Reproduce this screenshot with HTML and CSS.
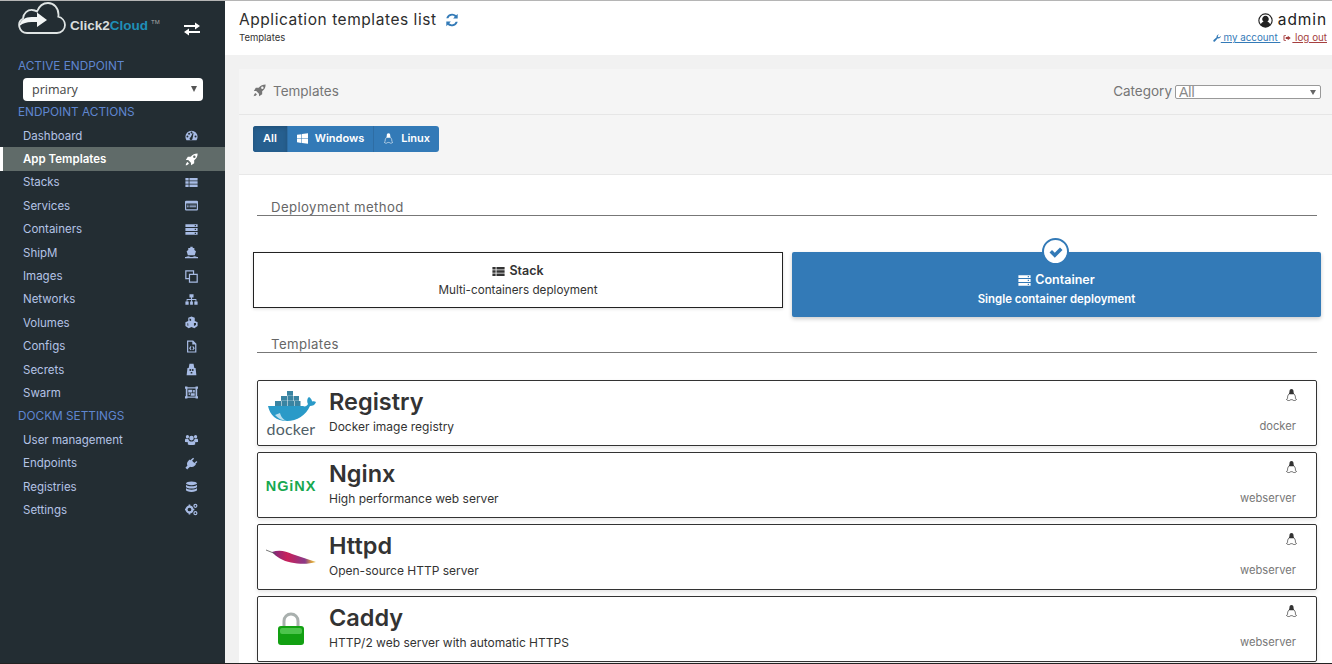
FILE: index.html
```html
<!DOCTYPE html>
<html>
<head>
    <title>Application templates list</title>
    <link rel="stylesheet" href="styles.css">
</head>
<body>
    <svg class="defs" width="0" height="0">
        <symbol id="i-dashboard" viewBox="0 0 16 16"><path fill-rule="evenodd" d="M8 2a7.5 7.5 0 0 0-7.5 7.5c0 1.600.5 3 1.300 4.200h12.400c.8-1.200 1.300-2.600 1.300-4.200A7.500 7.500 0 0 0 8 2zM3 10.500a1.200 1.200 0 1 1 0-2.400 1.200 1.200 0 0 1 0 2.400zm2-3.500a1.200 1.200 0 1 1 0-2.400A1.200 1.200 0 0 1 5 7zm3-1.500a1.200 1.200 0 1 1 0-2.400 1.200 1.200 0 0 1 0 2.400zm1.200 6.500a1.800 1.800 0 1 1-2.200-2L9.500 5l1 .3zM13 10.500a1.200 1.200 0 1 1 0-2.400 1.200 1.200 0 0 1 0 2.400z"/></symbol>
        <symbol id="i-rocket" viewBox="0 0 16 16"><path fill-rule="evenodd" d="M15.500.5c-3.500 0-6 1-8.500 4.200H3.500L1 8.500l3 .2L7.300 12l.2 3 3.800-2.500V9c3.200-2.500 4.200-5 4.200-8.500zM11.500 6a1.500 1.500 0 1 1 0-3 1.500 1.500 0 0 1 0 3zM3.200 11.200C2 12 1.200 13.500.8 15.200c1.700-.4 3.200-1.200 4-2.400z"/></symbol>
        <symbol id="i-list" viewBox="0 0 16 16"><path d="M.5 2.500h4v3h-4zM5.500 2.500h10v3h-10zM.5 6.500h4v3h-4zM5.500 6.500h10v3h-10zM.5 10.500h4v3h-4zM5.500 10.500h10v3h-10z"/></symbol>
        <symbol id="i-listalt" viewBox="0 0 16 16"><path fill-rule="evenodd" d="M1.500 2h13A1.500 1.500 0 0 1 16 3.500v9a1.500 1.500 0 0 1-1.500 1.500h-13A1.500 1.500 0 0 1 0 12.500v-9A1.500 1.500 0 0 1 1.500 2zM1.500 5.500v7h13v-7zM2.500 7h2v1h-2zM5.500 7h8v1h-8zM2.500 9h2v1h-2zM5.500 9h8v1h-8z"/></symbol>
        <symbol id="i-server" viewBox="0 0 16 16"><path fill-rule="evenodd" d="M.5 1.500h15v3.500H.5zM12 2.500v1.500h1.500V2.500zM.5 6.200h15v3.500H.5zM12 7.200v1.500h1.500V7.200zM.5 11h15v3.500H.5zM12 12v1.500h1.500V12z"/></symbol>
        <symbol id="i-ship" viewBox="0 0 16 16"><path d="M6.500 1h3v1.500h2V5l2 1.500-1.500 5H3.500L2 6.500 4 5V2.500h2.500zM0 13.500c2 0 2-1 4-1s2 1 4 1 2-1 4-1 2 1 4 1V15H0z"/></symbol>
        <symbol id="i-clone" viewBox="0 0 16 16"><path fill="none" stroke="currentColor" stroke-width="1.500" d="M5.500 5.500h9.500v9.500H5.500zM10.500 5V1H1v9.500h4"/></symbol>
        <symbol id="i-sitemap" viewBox="0 0 16 16"><path d="M5.500 1.500h5v4H8.700v2H14v3h1.500v4h-4v-4H13V8.700H8.700v1.800h1v4H6.300v-4h1.200V8.700H3v1.800h1.500v4h-4v-4H2v-3h5.300v-2H5.500z"/></symbol>
        <symbol id="i-cubes" viewBox="0 0 16 16"><path fill-rule="evenodd" d="M8 .5l4 1.500v4.200l3.500 1.400v4.800L11.500 15 8 13.400 4.500 15 .5 12.400V7.600L4 6.200V2zM5.500 3v2.500L7.500 6.300V3.800zM3 8.700v3l1 .6V9.200zM11 8.700v3.600l2.500-1.200V8.700z"/></symbol>
        <symbol id="i-file" viewBox="0 0 16 16"><path fill-rule="evenodd" d="M2.500.5h7.500l4 4v11h-11.500zM4 2v12h8.500V5.500H9V2zM7 7.500l-2 2.500 2 2.500 1-.8L6.800 10 8 8.300zM10 7.500l2 2.500-2 2.500-1-.8 1.200-1.700L9 8.300z"/></symbol>
        <symbol id="i-secret" viewBox="0 0 16 16"><path fill-rule="evenodd" d="M5.500 1h5l1 5h1.500L14 15H2l1-9h1.500zM6.500 7.500a1.200 1.200 0 1 0 0 2.400 1.200 1.200 0 0 0 0-2.400zM9.500 7.500a1.200 1.200 0 1 0 0 2.400 1.200 1.200 0 0 0 0-2.400zM7 11v2h2v-2z"/></symbol>
        <symbol id="i-group" viewBox="0 0 16 16"><path fill-rule="evenodd" d="M0 .5h3v1h10v-1h3v3h-1v9h1v3h-3v-1H3v1H0v-3h1v-9H0zM3 3v10h10V3zM4 4.500h5V8h-5zM7 9h5v3H7zM10 5h2v3h-2zM4.500 9h1.500v2H4.500z"/></symbol>
        <symbol id="i-users" viewBox="0 0 16 16"><path d="M3 2.500a2 2 0 1 1 0 4 2 2 0 0 1 0-4zM13 2.500a2 2 0 1 1 0 4 2 2 0 0 1 0-4zM8 3.500a2.800 2.800 0 1 1 0 5.600 2.800 2.800 0 0 1 0-5.600zM0 11V8.500C0 7.500.5 7 1.500 7H4c.2 1 1 2 1.500 2.500C4.500 10 4 10.500 3.500 11.500zM16 11V8.500c0-1-.5-1.500-1.500-1.500H12c-.2 1-1 2-1.500 2.500 1 .5 1.500 1 2 2zM5.500 9.800c1.500 1 3.500 1 5 0 1.500 0 2 1 2 2.200v2c-2.500 1-6.500 1-9 0v-2c0-1.200.5-2.200 2-2.200z"/></symbol>
        <symbol id="i-plug" viewBox="0 0 16 16"><path d="M10 .8l1.200 1.200-2.500 2.500 2.800 2.800L14 4.800 15.200 6 12.700 8.500l.8.800-1.600 1.600c-1.600 1.600-4 2-5.700 1L3.500 14.500 2.800 15.500.5 13.200l2.500-2.700c-1-1.700-.6-4.100 1-5.700l1.600-1.600.8.800z"/></symbol>
        <symbol id="i-database" viewBox="0 0 16 16"><path d="M8 .8c3.700 0 6.800 1 6.800 2.300S11.700 5.500 8 5.500 1.200 4.400 1.200 3.100 4.300.8 8 .8zM1.200 4.800c1 1.300 3.800 2 6.800 2s5.800-.7 6.800-2v2.500C14.800 8.600 11.700 9.600 8 9.600s-6.800-1-6.800-2.300zM1.200 8.900c1 1.300 3.800 2 6.800 2s5.800-.7 6.800-2v2.500c0 1.300-3.100 2.300-6.800 2.300s-6.800-1-6.800-2.300z" transform="translate(0 1)"/></symbol>
        <symbol id="i-cogs" viewBox="0 0 16 16"><circle cx="5.500" cy="8" r="3.600" fill="none" stroke="currentColor" stroke-width="2.600"/><circle cx="12.800" cy="3.500" r="1.800" fill="none" stroke="currentColor" stroke-width="1.500"/><circle cx="12.800" cy="12.500" r="1.800" fill="none" stroke="currentColor" stroke-width="1.500"/><path d="M4.500 1.800h2v2h-2zM4.500 12.200h2v2h-2zM-.5 7h2v2h-2zM9.500 7h2v2h-2z"/></symbol>
        <symbol id="i-refresh" viewBox="0 0 16 16"><path d="M14.500 1v5.200H9.300l1.900-1.900A4.500 4.500 0 0 0 3.800 6H1.500a6.800 6.800 0 0 1 11.300-3.300zM1.500 15V9.800h5.200l-1.900 1.900A4.500 4.500 0 0 0 12.200 10h2.300a6.800 6.800 0 0 1-11.300 3.300z"/></symbol>
        <symbol id="i-windows" viewBox="0 0 16 16"><path d="M0 2.600l6.500-.9v6H0zM7.300 1.600L16 .5v7.200H7.300zM0 8.500h6.500v6L0 13.600zM7.300 8.500H16v7.200l-8.700-1.200z"/></symbol>
        <symbol id="i-linux" viewBox="0 0 16 16"><path fill="currentColor" d="M8 .5c-1.800 0-2.500 1.300-2.500 3 0 1.500-.3 2.400-1 3.500h7c-.7-1.100-1-2-1-3.500 0-1.700-.7-3-2.500-3z"/><path fill="none" stroke="currentColor" stroke-width=".9" d="M4.500 7c-1 1.700-1.700 3.400-1.200 5L1.800 13.300c.5 1.300 2.500 1.700 3.700 1.400.7-.5 1.200-1 2.500-1s1.800.5 2.500 1c1.200.3 3.200-.1 3.700-1.400L12.700 12c.5-1.600-.2-3.300-1.200-5"/></symbol>
        <symbol id="i-wrench" viewBox="0 0 16 16"><path fill-rule="evenodd" d="M15.500 4.500a4.500 4.500 0 0 1-6 4.200L3.800 14.800a1.800 1.800 0 0 1-2.600-2.600l6.100-5.700A4.500 4.500 0 0 1 12 1l-2.500 2.500.5 2.500 2.500.5L15 4z"/></symbol>
        <symbol id="i-signout" viewBox="0 0 16 16"><path d="M6 2.500H2.500A1.500 1.500 0 0 0 1 4v8a1.500 1.500 0 0 0 1.500 1.500H6V12H3V4h3zM9.500 3.500L15.500 8l-6 4.500V10H5.500V6h4z"/></symbol>
        <symbol id="i-user" viewBox="0 0 16 16"><path fill-rule="evenodd" d="M8 .3a7.700 7.700 0 1 0 0 15.400A7.700 7.700 0 0 0 8 .3zM8 1.600a6.400 6.400 0 0 1 5 10.400c-.7-1.600-1.800-2.300-3-2.600a3.500 3.500 0 1 0-4 0c-1.200.3-2.300 1-3 2.600A6.400 6.400 0 0 1 8 1.600z"/></symbol>
        <symbol id="i-check" viewBox="0 0 16 16"><path d="M1.500 8.500l2.500-2.500 2.800 2.800L12 3.500l2.500 2.500-7.700 7.700z"/></symbol>
        <symbol id="i-swap" viewBox="0 0 16 16"><path d="M0 4h11V1.500L16 5l-5 3.500V6H0zM16 10H5V7.500L0 11l5 3.500V12h11z"/></symbol>
    </svg>

    <!-- left menu -->
    <div class="sidebar">
        <div class="brand">
            <svg class="cloud" viewBox="0 0 50 34" width="50" height="34">
                <path fill="none" stroke="#dfe4e4" stroke-width="1.800" d="M9 31a7.800 7.800 0 0 1-4-14.500c.4-5 4.500-9 9.500-8.500 1.500.1 3 .6 4.500 1.500C21 4.500 25 1 30 1c6 0 10.500 5 10.500 11.500 0 .8 0 1.500-.2 2.200 3.800 1 6.700 4.300 6.700 8.300 0 4.500-3.500 8-8 8z"/>
                <path fill="#f2f5f5" d="M1.500 24c.5-6 6-9 12-9h5.500v-4.500l10 7.500-10 7v-5h-5.500c-5 0-8 1-12 4z"/>
            </svg>
            <span class="brand-name">Click2<span class="brand-cloud">Cloud</span><sup class="brand-tm">TM</sup></span>
            <svg class="brand-toggle"><use href="#i-swap"/></svg>
        </div>
        <div class="nav-title first">ACTIVE ENDPOINT</div>
        <div class="endpoint-select">
            <select><option>primary</option></select>
        </div>
        <div class="nav-title actions">ENDPOINT ACTIONS</div>
        <a class="nav-row" href="#">Dashboard<svg><use href="#i-dashboard"/></svg></a>
        <a class="nav-row active" href="#">App Templates<svg><use href="#i-rocket"/></svg></a>
        <a class="nav-row" href="#">Stacks<svg><use href="#i-list"/></svg></a>
        <a class="nav-row" href="#">Services<svg><use href="#i-listalt"/></svg></a>
        <a class="nav-row" href="#">Containers<svg><use href="#i-server"/></svg></a>
        <a class="nav-row" href="#">ShipM<svg><use href="#i-ship"/></svg></a>
        <a class="nav-row" href="#">Images<svg><use href="#i-clone"/></svg></a>
        <a class="nav-row" href="#">Networks<svg><use href="#i-sitemap"/></svg></a>
        <a class="nav-row" href="#">Volumes<svg><use href="#i-cubes"/></svg></a>
        <a class="nav-row" href="#">Configs<svg><use href="#i-file"/></svg></a>
        <a class="nav-row" href="#">Secrets<svg><use href="#i-secret"/></svg></a>
        <a class="nav-row" href="#">Swarm<svg><use href="#i-group"/></svg></a>
        <div class="nav-title">DOCKM SETTINGS</div>
        <a class="nav-row" href="#">User management<svg><use href="#i-users"/></svg></a>
        <a class="nav-row" href="#">Endpoints<svg><use href="#i-plug"/></svg></a>
        <a class="nav-row" href="#">Registries<svg><use href="#i-database"/></svg></a>
        <a class="nav-row" href="#">Settings<svg><use href="#i-cogs"/></svg></a>
    </div>

    <div class="content">
        <!-- page header -->
        <div class="page-header">
            <div>
                <div class="page-title">Application templates list <svg class="refresh"><use href="#i-refresh"/></svg></div>
                <div class="crumb">Templates</div>
            </div>
            <div class="account">
                <div class="account-name"><svg><use href="#i-user"/></svg>admin</div>
                <div class="account-links">
                    <svg class="link-icon blue"><use href="#i-wrench"/></svg><a class="blue" href="#"> my account </a>
                    <svg class="link-icon red"><use href="#i-signout"/></svg><a class="red" href="#"> log out</a>
                </div>
            </div>
        </div>

        <div class="widget">
            <div class="widget-header">
                <div class="widget-title"><svg><use href="#i-rocket"/></svg>Templates</div>
                <div class="category">
                    Category
                    <div class="category-select"><select><option>All</option></select></div>
                </div>
            </div>

            <div class="filter-bar">
                <div class="btn-group">
                    <a class="btn on" href="#">All</a>
                    <a class="btn" href="#"><svg><use href="#i-windows"/></svg>Windows</a>
                    <a class="btn" href="#"><svg><use href="#i-linux"/></svg>Linux</a>
                </div>
            </div>

            <div class="widget-body">
                <div class="section-title">Deployment method</div>
                <div class="methods">
                    <div class="method">
                        <div class="method-name"><svg><use href="#i-list"/></svg>Stack</div>
                        <div class="method-desc">Multi-containers deployment</div>
                    </div>
                    <div class="method selected">
                        <span class="tick"><svg><use href="#i-check"/></svg></span>
                        <div class="method-name"><svg><use href="#i-server"/></svg>Container</div>
                        <div class="method-desc">Single container deployment</div>
                    </div>
                </div>

                <div class="section-title">Templates</div>
                <div class="template-list">
                    <div class="template">
                        <div class="template-logo docker">
                            <svg viewBox="0 0 50 30" width="50" height="30">
                                <path fill="#3a84a2" d="M21 0h6v4.700h-6zM15 5h6v4.700h-6zM21.500 5h6v4.700h-6zM28 5h5v4.700h-5zM9 10h6v5H9zM15.500 10h6v5h-6zM22 10h6v5h-6zM28.500 10h6v5h-6z"/>
                                <path fill="#2a9ac8" d="M2 15h35c2 1 4 0 5-2-1.500-3-.5-6 1-7 1.500 1 3 2.500 3 4.500 1.500-.5 3-.3 4 .5-1 3-3.500 4-6 4C40 24 31 30 21 30 10 30 4 24 2 15z"/>
                                <path fill="#b9dfee" d="M9 24c3 3.500 7 5.500 12 6-3-1-6-3.500-7-8z"/>
                            </svg>
                            <span class="docker-word">docker</span>
                        </div>
                        <div class="template-text">
                            <div class="template-name">Registry</div>
                            <div class="template-desc">Docker image registry</div>
                        </div>
                        <div class="template-side">
                            <svg><use href="#i-linux"/></svg>
                            <span>docker</span>
                        </div>
                    </div>
                    <div class="template">
                        <div class="template-logo"><span class="nginx-word">NGiNX</span></div>
                        <div class="template-text">
                            <div class="template-name">Nginx</div>
                            <div class="template-desc">High performance web server</div>
                        </div>
                        <div class="template-side">
                            <svg><use href="#i-linux"/></svg>
                            <span>webserver</span>
                        </div>
                    </div>
                    <div class="template">
                        <div class="template-logo">
                            <svg viewBox="0 0 50 16" width="50" height="16">
                                <defs>
                                    <linearGradient id="feather" x1="0" x2="1" y1="0" y2="0">
                                        <stop offset="0" stop-color="#7a2a80"/>
                                        <stop offset=".35" stop-color="#c9205a"/>
                                        <stop offset=".75" stop-color="#8a3a88"/>
                                        <stop offset=".9" stop-color="#d8a040"/>
                                        <stop offset="1" stop-color="#e8c860"/>
                                    </linearGradient>
                                </defs>
                                <path fill="url(#feather)" d="M6 3c7-2.500 14-1 20 2 8 3 16 5 24 8-8 2.500-17 2-25 .5C17 12 10 8 6 3z"/>
                                <path stroke="#555" stroke-width=".8" fill="none" d="M0 1l10 4"/>
                            </svg>
                        </div>
                        <div class="template-text">
                            <div class="template-name">Httpd</div>
                            <div class="template-desc">Open-source HTTP server</div>
                        </div>
                        <div class="template-side">
                            <svg><use href="#i-linux"/></svg>
                            <span>webserver</span>
                        </div>
                    </div>
                    <div class="template">
                        <div class="template-logo">
                            <svg viewBox="0 0 28 34" width="28" height="34">
                                <path fill="none" stroke="#a9b0ae" stroke-width="3" d="M7 16V9a7 7 0 0 1 14 0v7"/>
                                <rect x="1" y="14" width="26" height="19" rx="3" fill="#12a012"/>
                                <rect x="3" y="16" width="22" height="6" rx="2" fill="#4cc44c"/>
                            </svg>
                        </div>
                        <div class="template-text">
                            <div class="template-name">Caddy</div>
                            <div class="template-desc">HTTP/2 web server with automatic HTTPS</div>
                        </div>
                        <div class="template-side">
                            <svg><use href="#i-linux"/></svg>
                            <span>webserver</span>
                        </div>
                    </div>
                </div>
            </div>
        </div>
    </div>
</body>
</html>
```

FILE: styles.css
```css
/* page */
body {
    margin: 0;
    display: flex;
    height: 664px;
    overflow: hidden;
    border-top: 1px solid #b5b5b5;
    border-bottom: 1px solid #222;
    box-sizing: border-box;
    background: #f1f1f1;
    font-family: Inter, "Open Sans", sans-serif;
    color: #333;
}

a {
    text-decoration: none;
    color: inherit;
}

.defs {
    display: block;
    flex: none;
}

/* left menu */
.sidebar {
    width: 225px;
    flex: none;
    background: #232d33;
    color: #b4c3e6;
    font-size: 11.500px;
}

.brand {
    height: 60px;
    display: flex;
    align-items: flex-start;
    padding-left: 18px;
    box-sizing: border-box;
}

.cloud {
    margin-top: 1px;
    flex: none;
}

.brand-name {
    margin: 17px 0 0 2px;
    font-family: "Liberation Sans", sans-serif;
    font-weight: bold;
    font-size: 13.500px;
    color: #d9dddd;
    width: 112px;
    white-space: nowrap;
}

.brand-cloud {
    color: #1f8fb8;
}

.brand-tm {
    font-size: 6px;
    font-weight: normal;
    color: #aaa;
    vertical-align: 6px;
    line-height: 0;
    margin-left: 3px;
}

.brand-toggle {
    width: 16px;
    height: 16px;
    margin: 20px 0 0 2px;
    fill: #fff;
}

.nav-title {
    height: 23.400px;
    line-height: 23.400px;
    padding-left: 18px;
    color: #5f86d0;
    font-size: 11.800px;
    white-space: nowrap;
}

.nav-title.first {
    margin-top: -6px;
    height: 23px;
    line-height: 23px;
}

.nav-title.actions {
    height: 23px;
}

.endpoint-select {
    position: relative;
    width: 180px;
    margin-left: 23px;
}

.endpoint-select select {
    display: block;
    width: 100%;
    height: 23px;
    padding: 0 0 0 9px;
    border: 0;
    border-radius: 4px;
    background: #fff;
    color: #444;
    font-family: "Open Sans", sans-serif;
    font-size: 12.500px;
    appearance: none;
}

.endpoint-select::after {
    content: "";
    position: absolute;
    right: 6px;
    top: 8px;
    border: 3.500px solid transparent;
    border-top: 6px solid #555;
}

.nav-row {
    height: 23.400px;
    display: flex;
    align-items: center;
    justify-content: space-between;
    padding: 0 27px 0 23px;
    white-space: nowrap;
}

.nav-row svg {
    width: 13px;
    height: 13px;
    fill: currentColor;
    color: #a7bbe4;
}

.nav-row.active {
    background: #606b69;
    border-left: 3px solid #fff;
    padding-left: 20px;
    color: #fff;
    font-weight: 600;
}

.nav-row.active svg {
    color: #fff;
}

/* right side */
.content {
    flex: 1;
    min-width: 0;
}

.page-header {
    height: 54px;
    background: #fff;
    display: flex;
    justify-content: space-between;
    padding: 0 5px 0 14px;
}

.page-title {
    margin-top: 10px;
    font-size: 15.500px;
    letter-spacing: .55px;
    line-height: 18px;
    color: #2d2d2d;
}

.refresh {
    width: 14px;
    height: 14px;
    margin-left: 4px;
    vertical-align: -2px;
    fill: #337ab7;
}

.crumb {
    margin-top: 3px;
    font-size: 9.500px;
    line-height: 12px;
}

.account {
    text-align: right;
}

.account-name {
    margin-top: 10px;
    font-size: 15.500px;
    line-height: 18px;
    letter-spacing: .9px;
    display: flex;
    align-items: center;
    justify-content: flex-end;
    color: #222;
}

.account-name svg {
    width: 15px;
    height: 15px;
    margin-right: 5px;
    fill: #222;
}

.account-links {
    margin-top: 3px;
    font-size: 9.800px;
    line-height: 12px;
    white-space: nowrap;
}

.account-links a {
    text-decoration: underline;
}

.link-icon {
    width: 8px;
    height: 8px;
    vertical-align: -1px;
}

.link-icon.red {
    margin-left: 3px;
}

.blue {
    color: #337ab7;
    fill: #337ab7;
}

.red {
    color: #a53f3f;
    fill: #a53f3f;
    margin-left: 1px;
}

.widget {
    margin: 14px 0 0 14px;
}

.widget-header {
    height: 43px;
    background: #f5f5f5;
    border-bottom: 1px solid #e6e6e6;
    display: flex;
    justify-content: space-between;
    align-items: center;
    padding: 0 11px 2px 14px;
    color: #767676;
    font-size: 13.500px;
}

.widget-title {
    display: flex;
    align-items: center;
}

.widget-title svg {
    width: 13px;
    height: 13px;
    margin-right: 7px;
    fill: #767676;
}

.category {
    display: flex;
    align-items: center;
    gap: 3px;
}

.category-select {
    position: relative;
    width: 146px;
    margin-top: 2px;
}

.category-select select {
    display: block;
    width: 100%;
    height: 14px;
    padding: 0 0 0 3px;
    border: 1px solid #999;
    border-radius: 2px;
    box-sizing: border-box;
    background: #fff;
    color: #888;
    font-family: "Liberation Sans", sans-serif;
    font-size: 14px;
    line-height: 12px;
    appearance: none;
}

.category-select::after {
    content: "";
    position: absolute;
    right: 5px;
    top: 5px;
    border: 3px solid transparent;
    border-top: 5px solid #666;
}

.filter-bar {
    height: 60px;
    background: #f5f5f5;
    padding: 11px 0 0 14px;
    box-sizing: border-box;
    border-bottom: 1px solid #e8e8e8;
}

.btn-group {
    display: inline-flex;
    height: 26px;
    border-radius: 3px;
    overflow: hidden;
    background: #337ab7;
    color: #fff;
    font-size: 11px;
    font-weight: 600;
}

.btn {
    display: flex;
    align-items: center;
    padding: 0 9px 2px;
    border-right: 1px solid #2e6da4;
}

.btn:last-child {
    border-right: 0;
}

.btn.on {
    padding: 0 10px 2px;
    background: #265f8f;
    box-shadow: inset 0 2px 4px rgba(0,0,0,.15);
}

.btn svg {
    width: 11px;
    height: 11px;
    margin-right: 7px;
    fill: #fff;
    color: #fff;
}

.widget-body {
    background: #fff;
    padding: 22px 11px 0 14px;
    height: 488px;
    box-sizing: border-box;
}

.section-title {
    margin: 0 4px;
    padding-left: 14px;
    height: 18px;
    line-height: 20px;
    border-bottom: 1px solid #777;
    font-size: 13.200px;
    letter-spacing: .4px;
    color: #666;
}

.methods {
    display: grid;
    grid-template-columns: 530px 529px;
    gap: 9px;
    align-items: start;
    margin-top: 36px;
    height: 82px;
}

.method {
    position: relative;
    height: 56px;
    border: 1px solid #222;
    box-sizing: border-box;
    text-align: center;
    font-size: 11.700px;
    box-shadow: 0 1px 3px rgba(0,0,0,.15);
}

.method.selected {
    height: 65px;
    padding-top: 10px;
    border: 0;
    border-radius: 2px;
    background: #337ab7;
    color: #fff;
    font-size: 11.400px;
    font-weight: 600;
    box-shadow: 0 2px 4px rgba(0,0,0,.2);
}

.method-name {
    margin-top: 10px;
    font-size: 12.500px;
    font-weight: 600;
    line-height: 16px;
    display: flex;
    justify-content: center;
    align-items: center;
}

.method-name svg {
    width: 13px;
    height: 13px;
    margin-right: 4px;
    fill: currentColor;
}

.method-desc {
    margin-top: 3px;
    line-height: 16px;
}

.tick {
    position: absolute;
    left: 250px;
    top: -14px;
    width: 23px;
    height: 23px;
    display: flex;
    align-items: center;
    justify-content: center;
    border: 2.500px solid #337ab7;
    border-radius: 50%;
    background: #fff;
}

.tick svg {
    width: 16px;
    height: 16px;
    fill: #337ab7;
}

.template-list {
    margin: 27px 4px 0;
    display: flex;
    flex-direction: column;
    gap: 6px;
}

.template {
    height: 66px;
    flex: none;
    display: flex;
    box-sizing: border-box;
    border: 1px solid #333;
    border-radius: 2px;
    box-shadow: 0 2px 4px rgba(0,0,0,.1);
    padding: 0 20px 0 8px;
}

.template-logo {
    width: 50px;
    flex: none;
    display: flex;
    flex-direction: column;
    align-items: center;
    justify-content: center;
    margin-right: 13px;
}

.docker-word {
    font-family: Lato, sans-serif;
    font-size: 16px;
    line-height: 15px;
    letter-spacing: .2px;
    color: #4f6068;
}

.nginx-word {
    margin-top: 1px;
    font-family: "Liberation Sans", sans-serif;
    font-size: 14.500px;
    font-weight: bold;
    letter-spacing: .9px;
    color: #17a84f;
}

.template-text {
    flex: 1;
}

.template-name {
    margin-top: 6px;
    font-size: 23.500px;
    font-weight: 600;
    line-height: 30px;
    color: #333;
}

.template-desc {
    margin-top: 2px;
    font-size: 12px;
    line-height: 16px;
    color: #333;
}

.template-side {
    display: flex;
    flex-direction: column;
    align-items: flex-end;
    font-size: 11.200px;
    color: #777;
}

.template-side svg {
    width: 13px;
    height: 14px;
    margin: 7px -2px 0 0;
    color: #333;
    fill: none;
}

.template-side span {
    margin-top: 17px;
}
```
